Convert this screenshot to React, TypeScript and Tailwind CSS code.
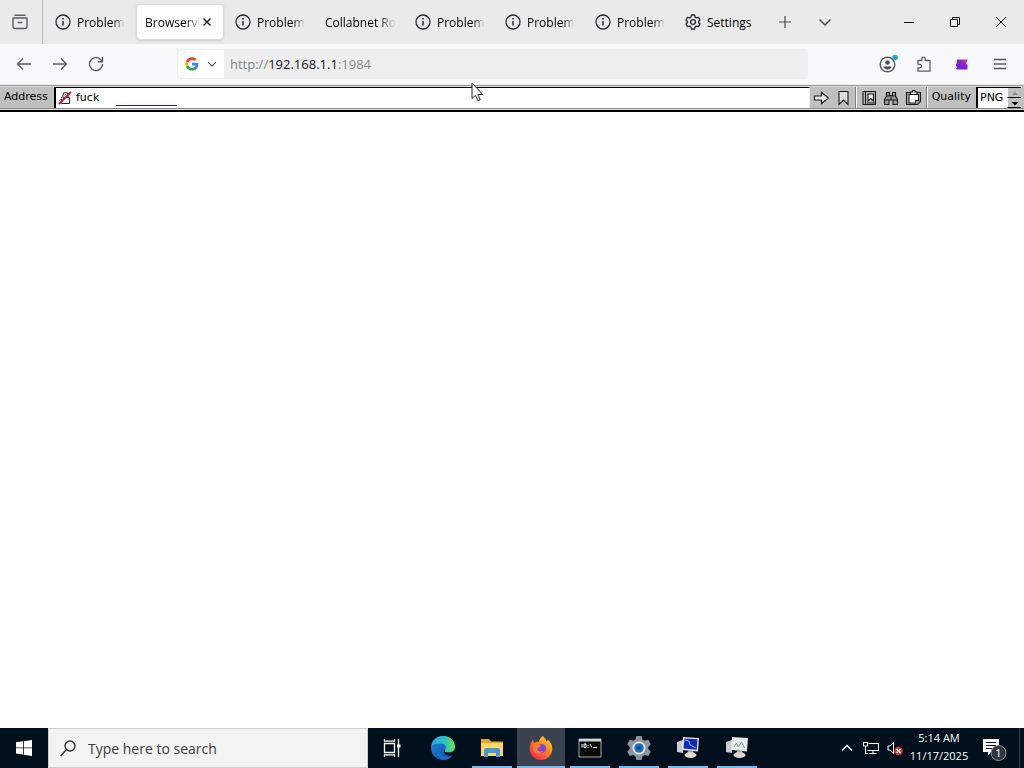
import type { ReactNode } from "react";

type Tab = {
  title: string;
  icon?: "info" | "gear";
  active?: boolean;
};

const tabs: Tab[] = [
  { title: "Problem", icon: "info" },
  { title: "Browservi", active: true },
  { title: "Problem", icon: "info" },
  { title: "Collabnet Ro" },
  { title: "Problem", icon: "info" },
  { title: "Problem", icon: "info" },
  { title: "Problem", icon: "info" },
  { title: "Settings", icon: "gear" },
];

export default function App() {
  return (
    <div className="flex h-screen flex-col overflow-hidden bg-white font-['Open_Sans',sans-serif] text-black">
      <TabStrip />
      <NavBar />
      <BrowserviceBar />
      <main className="min-h-0 flex-1 bg-white" />
      <Taskbar />
      <MouseCursor />
    </div>
  );
}

function TabStrip() {
  return (
    <header className="flex h-11 shrink-0 items-center bg-[#eaeaea]">
      <div className="flex h-full w-[43px] items-center justify-center border-r border-[#b5b5b5] pr-0.5">
        <button type="button" aria-label="Firefox View">
          <svg width="18" height="18" viewBox="0 0 18 18" fill="none" stroke="#5b5b66" strokeWidth="1.4" strokeLinecap="round">
            <path d="M4 2.2h10" />
            <path d="M2.5 5h13" />
            <path d="M2 5.2v8.3a2 2 0 0 0 2 2h10a2 2 0 0 0 2-2V5.2" />
            <path d="M7.2 9.5h3.6" />
          </svg>
        </button>
      </div>
      <nav className="ml-[3px] flex h-full items-center" aria-label="Tabs">
        {tabs.map((tab, i) => (
          <TabItem key={i} tab={tab} />
        ))}
      </nav>
      <button type="button" aria-label="New tab" className="ml-3">
        <svg width="14" height="14" viewBox="0 0 14 14" stroke="#4a4a4f" strokeWidth="1.2">
          <path d="M7 1v12M1 7h12" />
        </svg>
      </button>
      <button type="button" aria-label="List all tabs" className="ml-[26px]">
        <ChevronDown size={14} />
      </button>
      <div className="ml-auto flex h-full">
        <WindowButton label="Minimize">
          <path d="M1 6.5h10" />
        </WindowButton>
        <WindowButton label="Restore">
          <path d="M1.5 3.5h7v7h-7z" />
          <path d="M3.5 3.5v-2h7v7h-2" />
        </WindowButton>
        <WindowButton label="Close">
          <path d="M1 1l10 10M11 1L1 11" />
        </WindowButton>
      </div>
    </header>
  );
}

function TabItem({ tab }: { tab: Tab }) {
  if (tab.active) {
    return (
      <div className="flex h-full w-[90px] items-center">
        <div className="flex h-9 w-[88px] items-center rounded border border-[#dcdcdc] bg-white pl-2 shadow-sm">
          <button
            type="button"
            className="w-[56px] pt-0.5 text-left text-[12px] whitespace-nowrap [mask-image:linear-gradient(to_right,black_75%,transparent)]"
          >
            {tab.title}
          </button>
          <button type="button" aria-label="Close tab" className="ml-0.5">
            <svg width="8" height="8" viewBox="0 0 8 8" stroke="#15141a" strokeWidth="1.4">
              <path d="M0.5 0.5l7 7M7.5 0.5l-7 7" />
            </svg>
          </button>
        </div>
      </div>
    );
  }
  return (
    <button type="button" className="flex h-full w-[90px] items-center gap-[6px] pl-[9px] text-[12px]">
      {tab.icon === "info" && <InfoIcon />}
      {tab.icon === "gear" && <GearIcon />}
      {tab.title === "Settings" ? (
        <span className="pt-0.5">{tab.title}</span>
      ) : (
        <span className="pt-0.5 text-left whitespace-nowrap [mask-image:linear-gradient(to_right,black_75%,transparent)]">
          {tab.title}
        </span>
      )}
    </button>
  );
}

function WindowButton({ label, children }: { label: string; children: ReactNode }) {
  return (
    <button type="button" aria-label={label} className="flex h-full w-[46px] items-center justify-center">
      <svg width="12" height="12" viewBox="0 0 12 12" fill="none" stroke="#111" strokeWidth="1">
        {children}
      </svg>
    </button>
  );
}

function InfoIcon() {
  return (
    <svg className="shrink-0" width="16" height="16" viewBox="0 0 16 16" fill="none" stroke="#2b2a33" strokeWidth="1.3">
      <circle cx="8" cy="8" r="7" />
      <path d="M8 7v4.5" strokeWidth="1.5" />
      <path d="M8 4v1.6" strokeWidth="1.6" />
    </svg>
  );
}

function GearIcon() {
  return (
    <svg className="shrink-0" width="16" height="16" viewBox="0 0 24 24" fill="none" stroke="#2b2a33" strokeWidth="2" strokeLinejoin="round">
      <path d="M9.7 1.5h4.6l.8 3.2 2 1.2 3.2-.9 2.3 4-2.4 2.3v1.4l2.4 2.3-2.3 4-3.2-.9-2 1.2-.8 3.200H9.700l-.8-3.200-2-1.200-3.200.9-2.300-4 2.400-2.300v-1.400L1.400 9l2.300-4 3.200.9 2-1.200z" />
      <circle cx="12" cy="12" r="3.6" />
    </svg>
  );
}

function ChevronDown({ size }: { size: number }) {
  return (
    <svg width={size} height={size} viewBox="0 0 14 14" fill="none" stroke="#4a4a4f" strokeWidth="1.5">
      <path d="M1.5 4.500L7 10l5.500-5.500" />
    </svg>
  );
}

function NavBar() {
  return (
    <div className="flex h-10 shrink-0 items-center bg-[#f9f9fb] pr-4 pl-4 text-[#5b5b66]">
      <div className="flex w-[161px] shrink-0 gap-5">
        <button type="button" aria-label="Back">
          <svg width="16" height="16" viewBox="0 0 16 16" fill="none" stroke="currentColor" strokeWidth="1.4">
            <path d="M15 8H1.5M7 2.5L1.5 8 7 13.5" />
          </svg>
        </button>
        <button type="button" aria-label="Forward">
          <svg width="16" height="16" viewBox="0 0 16 16" fill="none" stroke="currentColor" strokeWidth="1.4">
            <path d="M1 8h13.5M9 2.5L14.5 8 9 13.5" />
          </svg>
        </button>
        <button type="button" aria-label="Reload">
          <svg width="16" height="16" viewBox="0 0 16 16" fill="none" stroke="currentColor" strokeWidth="1.4">
            <path d="M14.5 8A6.5 6.5 0 1 1 12.3 3.2L14 5" />
            <path d="M14.5 1v4.700H9.800" />
          </svg>
        </button>
      </div>
      <div className="flex h-[30px] min-w-0 flex-1 items-center rounded bg-[#eeeeee] p-px">
        <button type="button" aria-label="Search engine" className="flex h-7 w-[46px] items-center gap-2 rounded-l bg-white pl-[7px]">
          <GoogleIcon />
          <ChevronDown size={10} />
        </button>
        <div className="relative ml-[6px] min-w-0 flex-1 pt-0.5 text-[13px]">
          <input
            aria-label="Location"
            defaultValue="http://192.168.1.1:1984"
            className="w-full bg-transparent text-transparent outline-none"
          />
          {/* host part is emphasised, so the value is painted over the field */}
          <div aria-hidden="true" className="pointer-events-none absolute inset-0 flex items-center pt-0.5 text-[#85858a]">
            http://<span className="text-[#15141a]">192.168.1.1</span>:1984
          </div>
        </div>
      </div>
      <div className="ml-[70px] flex shrink-0 items-center gap-[22px]">
        <button type="button" aria-label="Account">
          <svg width="20" height="20" viewBox="0 0 20 20" fill="none">
            <circle cx="9.5" cy="10.5" r="7.3" stroke="#5b5b66" strokeWidth="1.5" />
            <circle cx="9.5" cy="8.5" r="2.3" fill="#4a4a55" />
            <path d="M5.3 12.5h8.4c-.7 2-2.300 3-4.200 3s-3.500-1-4.200-3z" fill="#4a4a55" />
            <circle cx="17" cy="3.5" r="2.8" fill="#20a9c6" />
          </svg>
        </button>
        <button type="button" aria-label="Extensions" className="-ml-1">
          <svg width="16" height="16" viewBox="0 0 16 16" fill="none" stroke="currentColor" strokeWidth="1.3" strokeLinejoin="round">
            <path d="M2 4.500h3.800V2.800a1.700 1.700 0 0 1 3.400 0v1.700H14v10.700H2v-3.400h1.700a1.700 1.700 0 0 0 0-3.500H2z" />
          </svg>
        </button>
        <button type="button" aria-label="Extension">
          <svg width="16" height="16" viewBox="0 0 16 16">
            <defs>
              <linearGradient id="ext" x1="0" y1="1" x2="1" y2="0">
                <stop offset="0" stopColor="#5b2be0" />
                <stop offset=".6" stopColor="#8e24c9" />
                <stop offset="1" stopColor="#ee4a80" />
              </linearGradient>
            </defs>
            <path d="M3 3.500h11l-2 4 1.500 1v5H3l-1-1 1.500-2H2V8l1-1z" fill="url(#ext)" />
          </svg>
        </button>
        <button type="button" aria-label="Menu">
          <svg width="16" height="16" viewBox="0 0 16 16" stroke="currentColor" strokeWidth="1.3">
            <path d="M2 3.500h12M2 8h12M2 12.500h12" />
          </svg>
        </button>
      </div>
    </div>
  );
}

function GoogleIcon() {
  return (
    <svg width="14" height="14" viewBox="0 0 48 48">
      <path fill="#4285F4" d="M46 24.500c0-1.600-.1-3.100-.4-4.500H24v9h12.400c-.6 2.900-2.200 5.300-4.600 7v5.800h7.500C43.600 37.800 46 31.700 46 24.500z" />
      <path fill="#34A853" d="M24 46.500c6.200 0 11.400-2 15.300-5.500l-7.500-5.800c-2.100 1.400-4.700 2.200-7.800 2.200-6 0-11-4-12.800-9.500H3.500v6C7.300 41.400 15 46.500 24 46.500z" />
      <path fill="#FBBC05" d="M11.200 28a13.500 13.500 0 0 1 0-8.600v-6H3.500a22.500 22.500 0 0 0 0 20.500z" />
      <path fill="#EA4335" d="M24 10c3.400 0 6.400 1.200 8.800 3.500l6.600-6.600C35.400 3.300 30.200 1 24 1 15 1 7.300 6.100 3.500 13.500l7.700 6C13 14 18 10 24 10z" />
    </svg>
  );
}

function BrowserviceBar() {
  return (
    <div className="flex h-7 shrink-0 flex-col border-b-2 border-black bg-[#d4d4d4] font-['DejaVu_Sans',sans-serif] text-[11px]">
      <div className="h-[3px] border-t border-b border-t-[#eeeeee] border-b-[#d8d8d8] bg-[#9a9a9a]" />
      <div className="flex h-[21px] items-stretch bg-[#c0c0c0]">
        <label htmlFor="address" className="flex w-[54px] items-center pl-1">
          Address
        </label>
        <div className="relative flex min-w-0 flex-1 items-center border-t border-r border-l-2 border-t-black border-r-[#eeeeee] border-l-black bg-white pl-0.5">
          <svg width="14" height="14" viewBox="0 0 14 14" fill="none">
            <path d="M3.500 6.500h8v6h-8zM5 6.500V4a2.500 2.500 0 0 1 5 0v2.500" stroke="#222" strokeWidth="1" />
            <path d="M1 13L13 1" stroke="#d4143c" strokeWidth="2" />
            <path d="M1 10L10 1" stroke="#e88a9c" strokeWidth="1" />
          </svg>
          <input id="address" defaultValue="fuck" className="ml-1 min-w-0 flex-1 bg-transparent outline-none" />
          <span className="absolute bottom-[2px] left-[60px] h-px w-[61px] bg-[#1a1ac8]" />
        </div>
        <div className="flex items-center gap-[5px] border-r border-[#808080] px-[3px]">
          <ToolButton label="Go">
            <path d="M1.500 6h7V2.500L15.500 8l-7 5.500V10h-7z" fill="#eee" />
          </ToolButton>
          <ToolButton label="Bookmark">
            <path d="M4 1.500h9v13L8.500 10 4 14.500z" fill="#ddd" />
          </ToolButton>
        </div>
        <div className="flex items-center gap-[5px] border-r border-l border-r-[#808080] border-l-white px-1">
          <ToolButton label="Bookmarks">
            <path d="M2 1.500h12.500v13H2zM4.500 1.500v13" fill="#bbb" />
            <path d="M7 4h5.500v7L9.800 8.500 7 11zM6 13h8" fill="#eee" />
          </ToolButton>
          <ToolButton label="Find">
            <path d="M3.500 2.500h3v3h3v-3h3V6l2 3.500v5H10V10H6v4.500H1.500v-5l2-3.500z" fill="#999" />
            <path d="M3.500 6h3M9.500 6h3M1.500 10h4.500M10 10h4.500M8 6v4" />
          </ToolButton>
          <ToolButton label="Clipboard">
            <path d="M1.500 2.500h14v9L12.500 14.500h-11z" fill="#aaa" />
            <path d="M4 4.500h9.500v6h-3V13H4z" fill="#fff" />
            <path d="M5.500 4.500V2h2V.5H10V2h2v2.500z" fill="#eee" />
          </ToolButton>
        </div>
        <div className="flex items-center border-l border-white pl-1">
          <label htmlFor="quality">Quality</label>
          <div className="ml-[5px] flex h-full items-center border-t border-l-2 border-black bg-white pl-0.5">
            <select id="quality" defaultValue="PNG" className="w-[27px] appearance-none bg-transparent outline-none">
              <option>PNG</option>
            </select>
            <div className="flex h-full w-[14px] flex-col bg-[#c0c0c0]">
              <SpinButton label="Higher quality" path="M4 6l3-3 3 3z" color="#888888" />
              <SpinButton label="Lower quality" path="M3.500 3l3.500 3.500L10.500 3z" color="#000000" />
            </div>
          </div>
          <div className="w-[3px]" />
        </div>
      </div>
      <div className="h-0.5 border-t border-[#8a8a8a] bg-[#dddddd]" />
    </div>
  );
}

function ToolButton({ label, children }: { label: string; children: ReactNode }) {
  return (
    <button type="button" aria-label={label}>
      <svg width="17" height="16" viewBox="0 0 17 16" fill="none" stroke="#1a1a1a" strokeWidth="1.1">
        {children}
      </svg>
    </button>
  );
}

function SpinButton({ label, path, color }: { label: string; path: string; color: string }) {
  return (
    <button type="button" aria-label={label} className="flex-1 border-b border-l border-b-black border-l-white">
      <svg className="block" width="14" height="8" viewBox="0 0 14 8">
        <path d={path} fill={color} />
      </svg>
    </button>
  );
}

function Taskbar() {
  return (
    <footer className="flex h-10 shrink-0 bg-[#020f1c] text-white">
      <button type="button" aria-label="Start" className="flex w-12 items-center justify-center">
        <svg width="16" height="16" viewBox="0 0 16 16" fill="#fff">
          <path d="M0 2.300L7 1.300v6.200H0zM7.800 1.200L16 0v7.500H7.800zM0 8.300h7v6.300l-7-1zM7.800 8.300H16V16l-8.200-1.200z" />
        </svg>
      </button>
      <div className="flex w-80 items-center border border-[#d0d0d0] bg-[#f3f3f3] pl-[11px]">
        <svg width="16" height="17" viewBox="0 0 16 17" fill="none" stroke="#2b2b2b" strokeWidth="1.4">
          <circle cx="10" cy="6" r="5" />
          <path d="M6.500 9.500L.6 16" />
        </svg>
        <input
          aria-label="Search"
          placeholder="Type here to search"
          className="ml-3 min-w-0 flex-1 bg-transparent text-[14px] text-[#333333] outline-none placeholder:text-[#3c3c3c]"
        />
      </div>
      <TaskButton label="Task View">
        <g stroke="#fff" strokeWidth="1.300" fill="none">
          <path d="M4.500 7.500h10v9h-10zM4.500 3v2.200h10V3M4.500 21v-2.200h10V21M18.500 3v18" />
          <path d="M17 8.500h3.500v3H17z" fill="#fff" stroke="none" />
        </g>
      </TaskButton>
      <div className="ml-[3px] flex gap-px">
        <TaskButton label="Edge">
          <defs>
            <linearGradient id="edge-a" x1="0" y1="0" x2="1" y2="0">
              <stop offset="0" stopColor="#2aa7e8" />
              <stop offset=".6" stopColor="#2fc4c4" />
              <stop offset="1" stopColor="#6be04c" />
            </linearGradient>
            <linearGradient id="edge-b" x1="0" y1="0" x2="1" y2="1">
              <stop offset="0" stopColor="#1f8fe0" />
              <stop offset="1" stopColor="#0d3f8f" />
            </linearGradient>
          </defs>
          <circle cx="12" cy="12" r="12" fill="url(#edge-b)" />
          <path d="M0 11C1 4 6 0 12 0c7 0 12 5 12 10.500 0 4-3 6-6.500 6-3 0-4.500-1.200-3.500-2.600 2-2.900-.2-6.400-4-6.400C5.500 7.500 1 8 0 11z" fill="url(#edge-a)" />
          <path d="M9 13c-1 4 2.500 8 7 8 2 0 3.800-.7 5-1.500C19 22.500 15.500 24 12 24c-4-1-7-6-3-11z" fill="#1871c8" />
          <path d="M14 14c-1 1.500.5 2.600 3.500 2.600 2.500 0 4.500-.8 5.500-2.300l1 2.500-3 2.700c-4 1-9-1-8-6z" fill="#020f1c" />
        </TaskButton>
        <TaskButton label="File Explorer" open>
          <path d="M1 3h8l2 2.500h12V20H1z" fill="#e4a92c" />
          <path d="M1 7h22v13H1z" fill="#fbd866" />
          <path d="M4 21v-7q0-2 2-2h12q2 0 2 2v7h-4v-4H8v4z" fill="#4b96d8" />
        </TaskButton>
        <TaskButton label="Firefox" open focused>
          <defs>
            <linearGradient id="fox" x1="1" y1="0" x2=".2" y2="1">
              <stop offset="0" stopColor="#ffe34a" />
              <stop offset=".45" stopColor="#ff8a1e" />
              <stop offset="1" stopColor="#f5205e" />
            </linearGradient>
          </defs>
          <path d="M14 0c2 2 3 3.500 3.300 5 1 .5 1.200-.5 1-1.500C22 6 23.500 10 23.300 13 23 19.500 18 24 12 24S.7 19 .7 13C.7 9 2 6 4 3.500L5 7c2-1.500 4-1.500 5-1C10 4 11.500 1 14 0z" fill="url(#fox)" />
          <circle cx="12.500" cy="12.500" r="4.600" fill="#7a48d8" />
          <path d="M4 9c3-2 6-1 8 1-1 2-3 1.500-4 3 1 3 4 3 6 1.500-1 4-8 4.500-10-.5z" fill="#ff7a25" />
        </TaskButton>
        <TaskButton label="Command Prompt" open>
          <path d="M1 3h22v18H1z" fill="#0a0a0a" stroke="#a8a8a8" />
          <path d="M1 3h22v2.500H1z" fill="#d5d5d5" />
          <path d="M4 8v3.500M6 8h2v3.500H6zM10 9v.8M10 11v.8M12 8l2 3.500M15 11.500h4" stroke="#fff" fill="none" />
        </TaskButton>
        <TaskButton label="Settings" open>
          <path d="M9.500 0h5l1 3.500 2.300 1.300 3.500-1 2.500 4.400L21.300 11v2l2.500 2.700-2.500 4.400-3.500-1-2.300 1.300-1 3.600h-5l-1-3.600-2.300-1.300-3.500 1-2.500-4.400L2.700 13v-2L.2 8.200l2.500-4.400 3.500 1 2.300-1.300z" fill="#8e959c" />
          <circle cx="12" cy="12" r="6.500" fill="#e8f0f6" />
          <circle cx="12" cy="12" r="4.800" fill="#1c6fb8" />
          <circle cx="12" cy="12" r="1.800" fill="#123f78" />
        </TaskButton>
        <TaskButton label="Remote Desktop" open>
          <Computer screen="#1428b4" />
          <path d="M9 4l4 1 1 4 6 3" stroke="#9fb4ff" fill="none" />
        </TaskButton>
        <TaskButton label="Performance Monitor" open>
          <Computer screen="#e8eeee" />
          <path d="M9 11l2.500-4 2 4 3-5 3 6" stroke="#7a8f8f" fill="none" />
        </TaskButton>
      </div>
      <div className="ml-auto flex items-center">
        <button type="button" aria-label="Show hidden icons">
          <svg width="12" height="12" viewBox="0 0 12 12" fill="none" stroke="#fff" strokeWidth="1.3">
            <path d="M1 8.500l5-5 5 5" />
          </svg>
        </button>
        <button type="button" aria-label="Network" className="ml-[10px]">
          <svg width="16" height="16" viewBox="0 0 16 16" fill="none" stroke="#fff" strokeWidth="1.1">
            <path d="M5.500 3.500h10v7H4.500M10 10.500v3M6.500 13.500h7" />
            <path d="M.5 2.500h4v3.500h-4zM2.500 6v7.500H5" />
          </svg>
        </button>
        <button type="button" aria-label="Volume" className="ml-2">
          <svg width="16" height="16" viewBox="0 0 16 16" fill="none">
            <path d="M1 6h2l3.500-3.500v11L3 10H1z" stroke="#fff" />
            <circle cx="11.500" cy="11" r="4.300" fill="#d8343c" />
            <path d="M9.500 9l4 4M13.500 9l-4 4" stroke="#fff" strokeWidth="1.1" />
          </svg>
        </button>
        <button type="button" aria-label="Clock" className="ml-[6px] flex h-full w-[60px] flex-col items-center justify-center pb-0.5 text-[11px] leading-[18px]">
          <span>5:14 AM</span>
          <span>11/17/2025</span>
        </button>
        <button type="button" aria-label="Notifications" className="ml-[14px]">
          <svg width="24" height="26" viewBox="0 0 24 26">
            <path d="M0 4h16v13H8l-3 3.500V17H0z" fill="#fff" />
            <path d="M3 7.500h10M3 10.500h10M3 13.500h6" stroke="#020f1c" />
            <circle cx="15.500" cy="18" r="7.500" fill="#30363f" stroke="#8b9097" />
            <text x="15.500" y="22" textAnchor="middle" fontSize="11" fill="#fff">
              1
            </text>
          </svg>
        </button>
        <button type="button" aria-label="Show desktop" className="ml-3 h-full w-[5px] border-l border-[#3a4656]" />
      </div>
    </footer>
  );
}

function TaskButton({
  label,
  open,
  focused,
  children,
}: {
  label: string;
  open?: boolean;
  focused?: boolean;
  children: ReactNode;
}) {
  return (
    <button
      type="button"
      aria-label={label}
      className={`flex h-10 w-12 flex-col items-center ${focused ? "bg-[#39424d]" : ""}`}
    >
      <span className="flex flex-1 items-center pt-0.5">
        <svg width="24" height="24" viewBox="0 0 24 24">
          {children}
        </svg>
      </span>
      <span className={`h-0.5 ${focused ? "w-12" : "w-10"} ${open ? "bg-[#76b9ed]" : ""}`} />
    </button>
  );
}

function Computer({ screen }: { screen: string }) {
  return (
    <>
      <path d="M1 6l6-2v13l-6-1z" fill="#c9ccd2" />
      <path d="M7 1l16 1-1 13.500L6 14z" fill="#e4e4e0" />
      <path d="M8.500 2.500l13 .8-.8 10.500L7.500 12.500z" fill={screen} />
      <path d="M12 15h5l1 3h-7z" fill="#a9aaa8" />
      <ellipse cx="14.500" cy="19" rx="6" ry="3" fill="#dcdad2" />
    </>
  );
}

function MouseCursor() {
  return (
    <svg className="pointer-events-none absolute top-[82px] left-[471px]" width="13" height="20" viewBox="0 0 13 20">
      <path d="M1 1v15.500l3.500-3.200 2.300 5.400 2.400-1-2.300-5.200h4.800z" fill="#fff" stroke="#222" strokeWidth="1" />
    </svg>
  );
}
